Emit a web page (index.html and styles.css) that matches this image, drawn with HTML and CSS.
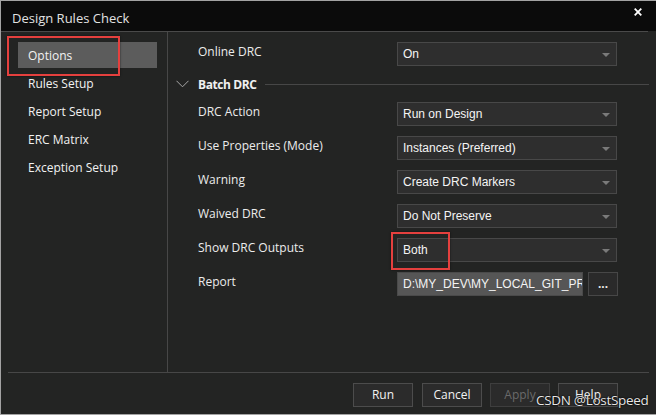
FILE: index.html
```html
<!DOCTYPE html>
<html>
<head>
<meta charset="utf-8">
<link rel="stylesheet" href="styles.css">
</head>
<body>
<div class="window">
  <div class="titlebar">
    <span class="title">Design Rules Check</span>
    <svg class="close" width="8" height="8" viewBox="0 0 8 8"><path d="M0.7 0.7 L7.3 7.3 M7.3 0.7 L0.7 7.3" stroke="#ffffff" stroke-width="1.8" fill="none"/></svg>
  </div>
  <div class="main">
    <div class="nav">
      <div class="nav-item active">Options</div>
      <div class="nav-item">Rules Setup</div>
      <div class="nav-item">Report Setup</div>
      <div class="nav-item">ERC Matrix</div>
      <div class="nav-item">Exception Setup</div>
    </div>
    <div class="panel">
      <div class="row">
        <div class="label">Online DRC</div>
        <div class="select">On<span class="arrow"></span></div>
      </div>
      <div class="group">
        <svg class="chev" width="13" height="8" viewBox="0 0 13 8"><path d="M0.5 0.8 L6.5 6.8 L12.5 0.8" stroke="#a8a8a8" stroke-width="1" fill="none"/></svg>
        <span class="group-title">Batch DRC</span>
        <span class="group-line"></span>
      </div>
      <div class="row">
        <div class="label">DRC Action</div>
        <div class="select">Run on Design<span class="arrow"></span></div>
      </div>
      <div class="row">
        <div class="label">Use Properties (Mode)</div>
        <div class="select">Instances (Preferred)<span class="arrow"></span></div>
      </div>
      <div class="row">
        <div class="label">Warning</div>
        <div class="select">Create DRC Markers<span class="arrow"></span></div>
      </div>
      <div class="row">
        <div class="label">Waived DRC</div>
        <div class="select">Do Not Preserve<span class="arrow"></span></div>
      </div>
      <div class="row">
        <div class="label">Show DRC Outputs</div>
        <div class="select">Both<span class="arrow"></span></div>
      </div>
      <div class="row">
        <div class="label">Report</div>
        <div class="field">D:\MY_DEV\MY_LOCAL_GIT_PROJECTS\DRC_Report.rpt</div>
        <div class="browse">...</div>
      </div>
    </div>
  </div>
  <div class="footer">
    <div class="btn first">Run</div>
    <div class="btn">Cancel</div>
    <div class="btn disabled">Apply</div>
    <div class="btn">Help</div>
  </div>
  <div class="mark mark-options"></div>
  <div class="mark mark-both"></div>
  <div class="watermark">CSDN @LostSpeed</div>
</div>
</body>
</html>
```
FILE: styles.css
```css
html, body {
  margin: 0;
  padding: 0;
  background: #232423;
}
.window {
  position: relative;
  width: 655px;
  height: 413px;
  border-left: 1px solid #a3a3a3;
  border-top: 1px solid #a3a3a3;
  border-bottom: 1px solid #a3a3a3;
  background: #232423;
  font-family: "Open Sans", "Noto Sans", sans-serif;
  font-size: 12px;
  color: #f0f0f0;
  overflow: hidden;
}
.titlebar {
  height: 31px;
  box-sizing: border-box;
  background:
    linear-gradient(to right, #4a4a4a 647px, #232423 647px) left bottom / 100% 1px no-repeat,
    #0b0b0b;
  padding: 8px 0 0 11px;
  position: relative;
}
.title {
  display: block;
  font-size: 13px;
  line-height: 18px;
  color: #e2e2e2;
}
.close {
  position: absolute;
  left: 633px;
  top: 7px;
}
.main {
  margin: 0 7px;
  height: 340px;
  border-bottom: 1px solid #474747;
  display: flex;
}
.nav {
  width: 139px;
  padding: 10px 10px 0 10px;
  border-right: 1px solid #474747;
  display: flex;
  flex-direction: column;
}
.nav-item {
  height: 28px;
  line-height: 28px;
  padding-left: 10px;
  color: #f2f2f2;
}
.nav-item.active {
  height: 26px;
  margin-bottom: 2px;
  background: #5c5c5c;
}
.panel {
  flex: 1;
  padding: 10px 0 0 30px;
  display: flex;
  flex-direction: column;
  gap: 10px;
}
.row {
  display: flex;
  align-items: flex-start;
  height: 24px;
}
.label {
  width: 199px;
  padding-top: 1px;
  line-height: 18px;
  color: #ececec;
}
.select {
  position: relative;
  box-sizing: border-box;
  width: 220px;
  height: 24px;
  border: 1px solid #484848;
  background: #2e2e2e;
  padding-left: 5px;
  line-height: 22px;
  font-family: "Liberation Sans", Arial, sans-serif;
  font-size: 12px;
  color: #f4f4f4;
}
.arrow {
  position: absolute;
  right: 6px;
  top: 10px;
  width: 0;
  height: 0;
  border-left: 4px solid transparent;
  border-right: 4px solid transparent;
  border-top: 4px solid #7a7a7a;
}
.group {
  display: flex;
  align-items: center;
  height: 16px;
  margin-left: -22px;
}
.chev {
  margin-right: 9px;
}
.group-title {
  font-weight: bold;
  letter-spacing: -0.4px;
  color: #f0f0f0;
}
.group-line {
  flex: 1;
  height: 1px;
  background: #474747;
  margin-left: 8px;
}
.field {
  box-sizing: border-box;
  width: 186px;
  height: 24px;
  border: 1px solid #4a4a4a;
  background: #565656;
  padding-left: 5px;
  line-height: 22px;
  font-family: "Liberation Sans", Arial, sans-serif;
  font-size: 12px;
  color: #f4f4f4;
  white-space: nowrap;
  overflow: hidden;
}
.browse {
  box-sizing: border-box;
  width: 30px;
  height: 24px;
  margin-left: 5px;
  border: 1px solid #474747;
  background: #2a2a2a;
  text-align: center;
  line-height: 22px;
  font-family: "Liberation Sans", Arial, sans-serif;
  font-weight: bold;
  color: #e8e8e8;
}
.footer {
  height: 41px;
  box-sizing: border-box;
  padding: 10px 38px 0 0;
  display: flex;
  justify-content: flex-end;
  gap: 8px;
}
.btn {
  box-sizing: border-box;
  width: 60px;
  height: 24px;
  border: 1px solid #4c4c4c;
  background: #2b2b2b;
  text-align: center;
  line-height: 22px;
  color: #f2f2f2;
}
.btn.first {
  margin-right: 1px;
}
.btn.disabled {
  color: #6a6a6a;
  border-color: #3e3e3e;
}
.mark {
  position: absolute;
  border: 2px solid #e5403e;
  box-shadow: 0 0 2px rgba(0,0,0,0.6);
}
.mark-options {
  left: 6px;
  top: 35px;
  width: 109px;
  height: 36px;
}
.mark-both {
  left: 390px;
  top: 231px;
  width: 55px;
  height: 34px;
}
.watermark {
  position: absolute;
  left: 535px;
  top: 390px;
  font-size: 13.5px;
  letter-spacing: -0.3px;
  line-height: 18px;
  color: #e6e6e6;
  text-shadow: 0 0 2px #000, 0 0 1px #000;
}
```
